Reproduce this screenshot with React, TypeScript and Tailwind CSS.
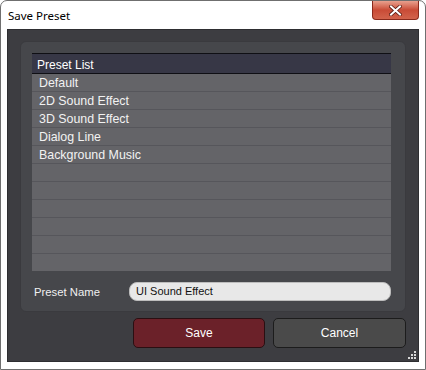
const PRESETS = ['Default', '2D Sound Effect', '3D Sound Effect', 'Dialog Line', 'Background Music'];
const ROW_COUNT = 11;

function CloseButton() {
  return (
    <div className="absolute right-[6px] top-0 flex h-[19px] w-[47px] items-center justify-center rounded-b-[4px] border border-t-0 border-[#8a2a1c] bg-gradient-to-b from-[#e8a08e] via-[#c94b36] to-[#d2634c]">
      <svg width="13" height="11" viewBox="0 0 13 11">
        <path d="M2 1.5 L11 9.5 M11 1.5 L2 9.5" stroke="#5a1a10" strokeWidth="3.6" strokeLinecap="square" />
        <path d="M2 1.5 L11 9.5 M11 1.5 L2 9.5" stroke="#ffffff" strokeWidth="2" strokeLinecap="square" />
      </svg>
    </div>
  );
}

function ResizeGrip() {
  const dots = [[6, 0], [3, 3], [6, 3], [0, 6], [3, 6], [6, 6]];
  return (
    <svg className="absolute bottom-[1px] right-[1px]" width="9" height="9" viewBox="0 0 9 9">
      {dots.map(([x, y]) => (
        <rect key={`${x}-${y}`} x={x} y={y} width="2" height="2" fill="#d8d8d8" />
      ))}
    </svg>
  );
}

export default function App() {
  return (
    <div className="relative h-[370px] w-[426px] overflow-hidden rounded-t-[7px] border border-[#6f6f6f] bg-white font-['Liberation_Sans',Arial,sans-serif]">
      <div className="flex h-[28px] items-center pl-[7px] pt-[1px] font-['Noto_Sans',sans-serif] text-[11.5px] text-black">
        Save Preset
      </div>
      <CloseButton />

      <div className="relative mx-[6px] h-[333px] border border-[#2e2e31] bg-[#3d3d41] px-[12px] pt-[11px]">
        <div className="h-[271px] rounded-[6px] border border-[#3a3a3e] bg-[#46474b] pl-[11px] pr-[14px] pt-[11px]">
          <div className="w-[359px]">
            <div className="flex h-[21px] items-center border-y border-[#0f0f14] bg-[#373746] pl-[5px] pt-[2px] text-[12px] text-white">
              Preset List
            </div>
            <div className="h-[197px] overflow-hidden bg-[#646468]">
              {Array.from({ length: ROW_COUNT }).map((_, i) => (
                <div
                  key={i}
                  className="flex h-[18px] items-center border-b border-[#56565b] pl-[7px] pt-[2px] text-[12.4px] text-[#f2f2f2]"
                >
                  {PRESETS[i] ?? ''}
                </div>
              ))}
            </div>
          </div>

          <div className="mt-[11px] flex items-center">
            <span className="w-[97px] pl-[2px] pt-[1px] text-[11.3px] text-[#f0f0f0]">Preset Name</span>
            <div className="flex h-[19px] w-[262px] items-center rounded-[8px] border border-[#bdbdbd] bg-[#e8e8e8] pl-[6px] text-[11px] text-[#111]">
              UI Sound Effect
            </div>
          </div>
        </div>

        <div className="mt-[6px] flex justify-end gap-[8px]">
          <button
            type="button"
            className="h-[30px] w-[132px] rounded-[5px] border border-[#2a0f12] bg-[#6b2129] text-[12px] text-white"
          >
            Save
          </button>
          <button
            type="button"
            className="h-[30px] w-[133px] rounded-[5px] border border-[#1c1c1c] bg-[#4a4a4a] text-[12px] text-white"
          >
            Cancel
          </button>
        </div>

        <ResizeGrip />
      </div>
    </div>
  );
}
